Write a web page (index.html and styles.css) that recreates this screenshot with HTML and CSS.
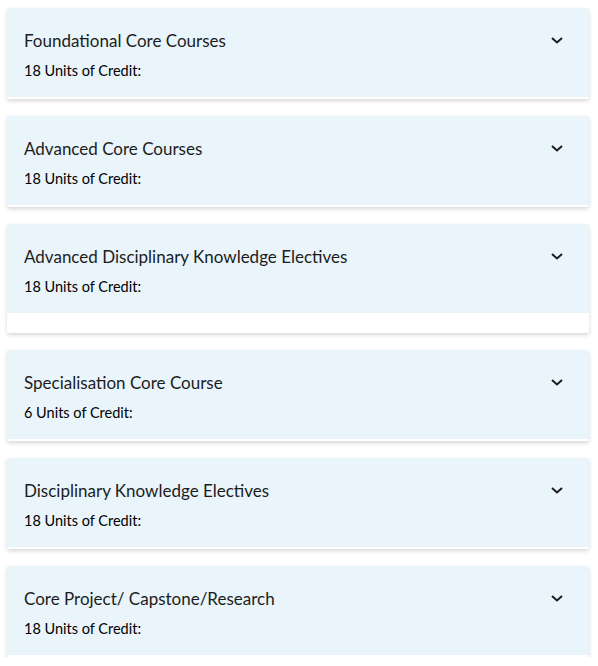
FILE: index.html
```html
<!DOCTYPE html>
<html lang="en">
<head>
<meta charset="utf-8">
<title>Program Structure</title>
<link rel="stylesheet" href="styles.css">
</head>
<body>
<div class="accordion">
  <section class="panel">
    <div class="panel-head">
      <div class="panel-text">
        <h3 class="panel-title">Foundational Core Courses</h3>
        <p class="panel-uoc">18 Units of Credit:</p>
      </div>
      <svg class="chev" width="14" height="10" viewBox="0 0 14 10"><path d="M2 3 L7 7.5 L12 3" fill="none" stroke="#1b1b1b" stroke-width="2"/></svg>
    </div>
  </section>
  <section class="panel">
    <div class="panel-head">
      <div class="panel-text">
        <h3 class="panel-title">Advanced Core Courses</h3>
        <p class="panel-uoc">18 Units of Credit:</p>
      </div>
      <svg class="chev" width="14" height="10" viewBox="0 0 14 10"><path d="M2 3 L7 7.5 L12 3" fill="none" stroke="#1b1b1b" stroke-width="2"/></svg>
    </div>
  </section>
  <section class="panel">
    <div class="panel-head">
      <div class="panel-text">
        <h3 class="panel-title">Advanced Disciplinary Knowledge Electives</h3>
        <p class="panel-uoc">18 Units of Credit:</p>
      </div>
      <svg class="chev" width="14" height="10" viewBox="0 0 14 10"><path d="M2 3 L7 7.5 L12 3" fill="none" stroke="#1b1b1b" stroke-width="2"/></svg>
    </div>
    <div class="panel-foot"></div>
  </section>
  <section class="panel">
    <div class="panel-head">
      <div class="panel-text">
        <h3 class="panel-title">Specialisation Core Course</h3>
        <p class="panel-uoc">6 Units of Credit:</p>
      </div>
      <svg class="chev" width="14" height="10" viewBox="0 0 14 10"><path d="M2 3 L7 7.5 L12 3" fill="none" stroke="#1b1b1b" stroke-width="2"/></svg>
    </div>
  </section>
  <section class="panel">
    <div class="panel-head">
      <div class="panel-text">
        <h3 class="panel-title">Disciplinary Knowledge Electives</h3>
        <p class="panel-uoc">18 Units of Credit:</p>
      </div>
      <svg class="chev" width="14" height="10" viewBox="0 0 14 10"><path d="M2 3 L7 7.5 L12 3" fill="none" stroke="#1b1b1b" stroke-width="2"/></svg>
    </div>
  </section>
  <section class="panel">
    <div class="panel-head">
      <div class="panel-text">
        <h3 class="panel-title">Core Project/ Capstone/Research</h3>
        <p class="panel-uoc">18 Units of Credit:</p>
      </div>
      <svg class="chev" width="14" height="10" viewBox="0 0 14 10"><path d="M2 3 L7 7.5 L12 3" fill="none" stroke="#1b1b1b" stroke-width="2"/></svg>
    </div>
  </section>
</div>
</body>
</html>
```
FILE: styles.css
```css
html, body {
  margin: 0;
  padding: 0;
  background: #ffffff;
}

body {
  font-family: Lato, "Open Sans", sans-serif;
  color: #1c1c1c;
}

.accordion {
  display: flex;
  flex-direction: column;
  gap: 17px;
  padding: 8px 9px 0 7px;
}

.panel {
  background: #ffffff;
  border-radius: 2px;
  box-shadow: 0 2px 4px rgba(0, 0, 0, 0.16);
  padding-bottom: 2px;
}

.panel-head {
  background: #e9f4fb;
  display: flex;
  justify-content: space-between;
  align-items: flex-start;
  padding: 23px 25px 16px 17px;
  border-radius: 2px 2px 0 0;
}

.panel-title {
  margin: 0;
  font-size: 17px;
  font-weight: 400;
  line-height: 20px;
  color: #1c1c1c;
}

.panel-uoc {
  margin: 10px 0 0;
  font-size: 14.5px;
  font-weight: 400;
  line-height: 20px;
  color: #000000;
}

.chev {
  margin-top: 4px;
  display: block;
}

.panel-foot {
  height: 18px;
}
```
